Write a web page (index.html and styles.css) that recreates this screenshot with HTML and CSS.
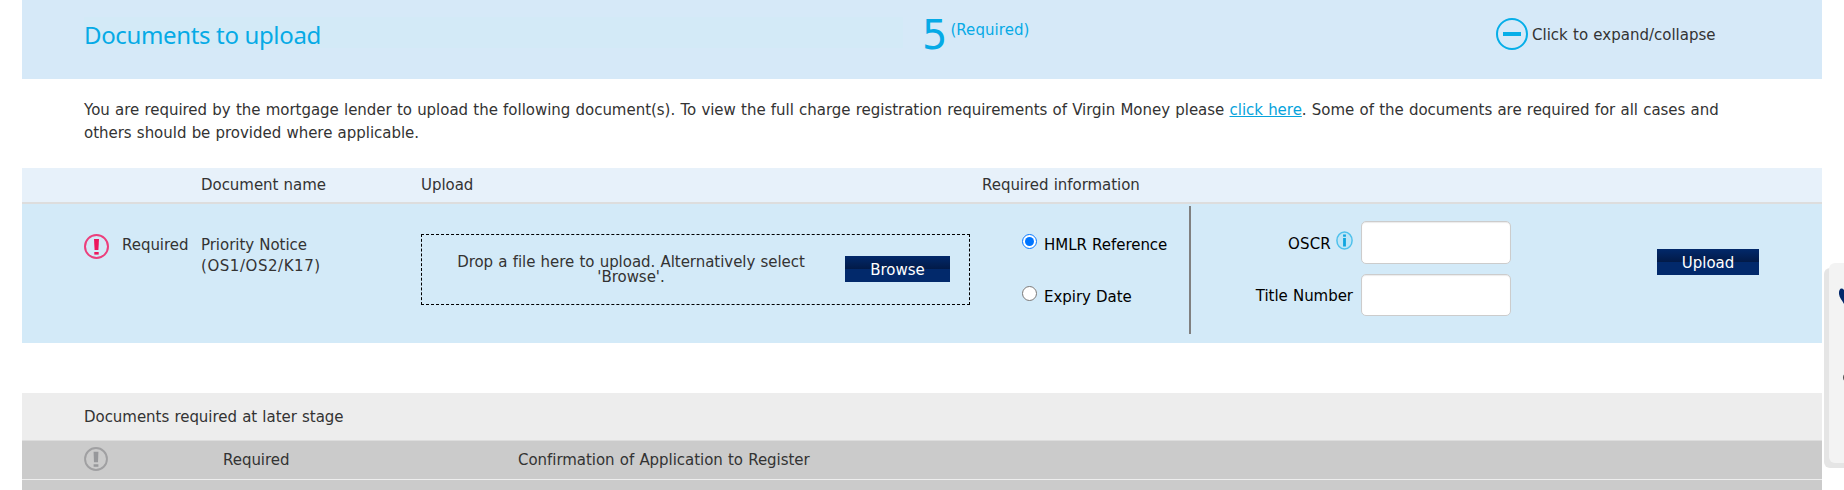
FILE: index.html
```html
<!DOCTYPE html>
<html lang="en">
<head>
<meta charset="utf-8">
<title>Documents to upload</title>
<link rel="stylesheet" href="styles.css">
</head>
<body>
<main class="page">
  <header class="panel-head">
    <h2 class="title"><span>Documents to upload</span></h2>
    <div class="count"><span class="num">5</span><span class="req">(Required)</span></div>
    <div class="toggle">
      <svg width="32" height="32" viewBox="0 0 32 32"><circle cx="16" cy="16" r="15" fill="none" stroke="#06aee8" stroke-width="2"/><path d="M7 16h18" stroke="#06aee8" stroke-width="4"/></svg>
      <span>Click to expand/collapse</span>
    </div>
  </header>
  <p class="intro">You are required by the mortgage lender to upload the following document(s). To view the full charge registration requirements of Virgin Money please <a href="#">click here</a>. Some of the documents are required for all cases and<br>others should be provided where applicable.</p>
  <div class="cols thead">
    <span></span><span></span><span>Document name</span><span>Upload</span><span class="info">Required information</span>
  </div>
  <div class="cols row">
    <svg class="alert" width="25" height="25" viewBox="0 0 25 25"><circle cx="12.5" cy="12.5" r="11.5" fill="none" stroke="#ec3f7c" stroke-width="2"/><path d="M10 5h5l-.6 11h-3.8z" fill="#ec175c"/><path d="M10.300 18h4.400v2.600h-4.400z" fill="#ec175c"/></svg>
    <span class="cell">Required</span>
    <span class="cell">Priority Notice<br><span class="codes">(OS1/OS2/K17)</span></span>
    <div class="drop">
      <span class="droptext">Drop a file here to upload. Alternatively select 'Browse'.</span>
      <button class="btn browse">Browse</button>
    </div>
    <div class="radios">
      <label><input type="radio" name="kind" checked><span>HMLR Reference</span></label>
      <label><input type="radio" name="kind"><span>Expiry Date</span></label>
    </div>
    <div class="fields">
      <label class="field"><span class="lbl oscr">OSCR</span><svg class="i" width="17" height="19" viewBox="0 0 17 19"><ellipse cx="8.5" cy="9.5" rx="7.6" ry="8.6" fill="#c0e6f7" stroke="#4fc1ec" stroke-width="1.5"/><path d="M8.5 7v8.500M8.500 3.400v2.400" stroke="#0fa5df" stroke-width="2.800"/></svg><input type="text"></label>
      <label class="field"><span class="lbl">Title Number</span><input class="short" type="text"></label>
    </div>
    <button class="btn upload">Upload</button>
  </div>
  <section class="later">
    <div class="later-head">Documents required at later stage</div>
    <div class="later-row">
      <svg width="24" height="24" viewBox="0 0 25 25"><circle cx="12.500" cy="12.500" r="11.400" fill="none" stroke="#a0a0a2" stroke-width="2"/><path d="M10 5h5l-.4 11h-4.200z" fill="#97989b"/><path d="M10 18h5v2.600h-5z" fill="#97989b"/></svg>
      <span>Required</span><span>Confirmation of Application to Register</span>
    </div>
    <div class="later-row next"></div>
  </section>
</main>
<aside class="dock">
  <div class="dock-card">
    <svg width="15" height="200" viewBox="0 0 15 200"><path d="M15 27C12.500 24 9.500 26 10 31C10.500 35 13 37 15 41Z" fill="#04286b"/><circle cx="18" cy="114.500" r="4" fill="#555"/></svg>
  </div>
</aside>
</body>
</html>
```
FILE: styles.css
```css
* { box-sizing: border-box; }
html, body { height: 490px; overflow: hidden; }
body { margin: 0; background: #fff; color: #333; font: 15px/23px Verdana, "DejaVu Sans", sans-serif; letter-spacing: -0.04px; word-spacing: 0.5px; }
.page { width: 1800px; margin-left: 22px; }
.panel-head { display: grid; grid-template-columns: 838px 574px 1fr; height: 79px; padding: 17px 0 0 62px; background: #d6e9f8; align-items: start; }
.title { margin: 0; width: 819px; height: 31px; background: #d3eaf7; color: #06aae6; font: 24px/36px "Noto Sans", sans-serif; letter-spacing: -0.35px; word-spacing: 0; white-space: nowrap; }
.count { display: flex; gap: 3px; color: #06aae6; }
.num { font-size: 40px; line-height: 37px; }
.req { line-height: 27px; letter-spacing: 0.05px; }
.toggle { display: flex; align-items: center; gap: 4px; padding-top: 1px; white-space: nowrap; }
.toggle span { padding-top: 2px; letter-spacing: 0; }
.intro { margin: 0; padding: 20px 0 0 62px; height: 89px; white-space: nowrap; letter-spacing: -0.027px; }
.intro a { color: #06a3dc; }
.cols { display: grid; grid-template-columns: 38px 79px 220px 549px 219px 322px 174px; padding-left: 62px; }
.thead { height: 36px; background: #e7f1fa; border-bottom: 2px solid #ddd; line-height: 34px; }
.info { padding-left: 12px; white-space: nowrap; }
.row { height: 139px; background: #d3eaf8; align-items: start; }
.alert { margin-top: 30px; }
.cell { line-height: 21px; padding-top: 31px; }
.codes { letter-spacing: 0.55px; }
.drop { margin-top: 30px; height: 71px; border: 1px dashed #000; display: flex; padding-left: 33px; align-items: flex-start; }
.droptext { width: 352px; margin-top: 20px; line-height: 15px; text-align: center; letter-spacing: -0.04px; }
.btn { border: 0; padding: 1px 0 0; height: 26px; color: #fff; font: inherit; background: linear-gradient(#02296b, #021a47 50%, #02296b 50%, #02296b); }
.browse { width: 105px; margin: 21px 0 0 38px; padding-top: 2px; }
.radios { height: 128px; margin-top: 2px; padding: 28px 0 0 52px; color: #000; display: flex; flex-direction: column; gap: 28px; border-right: 2px solid #808080; width: 221px; }
.radios label { display: flex; height: 24px; gap: 7px; align-items: flex-start; line-height: 22px; white-space: nowrap; }
.radios input { margin: 0; width: 15px; height: 15px; accent-color: #0075ff; }
.fields { padding-top: 17px; color: #000; display: flex; flex-direction: column; gap: 10px; }
.field { display: flex; justify-content: flex-end; gap: 8px; height: 43px; }
.lbl { padding-top: 11px; }
.oscr { padding-top: 12px; letter-spacing: 0.2px; }
.field .i { margin: 10px 0 0 -3px; }
.field input { width: 150px; height: 43px; border: 1px solid #ccc; border-radius: 5px; background: #fff; box-shadow: inset 0 1px 1px rgba(0,0,0,.08); }
.field .short { height: 42px; }
.upload { width: 102px; margin: 45px 0 0 146px; padding-top: 2px; }
.later { margin-top: 50px; }
.later-head { height: 48px; padding-left: 62px; background: #ededed; border-bottom: 1px solid #ddd; line-height: 49px; }
.later-row { display: grid; grid-template-columns: 139px 295px 1fr; height: 39px; padding-left: 62px; background: #cbcbcb; border-bottom: 1px solid #eee; align-items: center; }
.later-row svg { margin-bottom: 2px; }
.next { height: 10px; border: 0; }
.dock { position: absolute; top: 263px; left: 1824px; width: 20px; height: 205px; padding-left: 5px; }
.dock::before { content: ""; position: absolute; inset: 5px 0 0 0; background: #e5e5e5; border-radius: 6px 0 0 6px; }
.dock-card { position: relative; height: 200px; background: #f3f3f3; border-radius: 6px 0 0 6px; overflow: hidden; }
```
